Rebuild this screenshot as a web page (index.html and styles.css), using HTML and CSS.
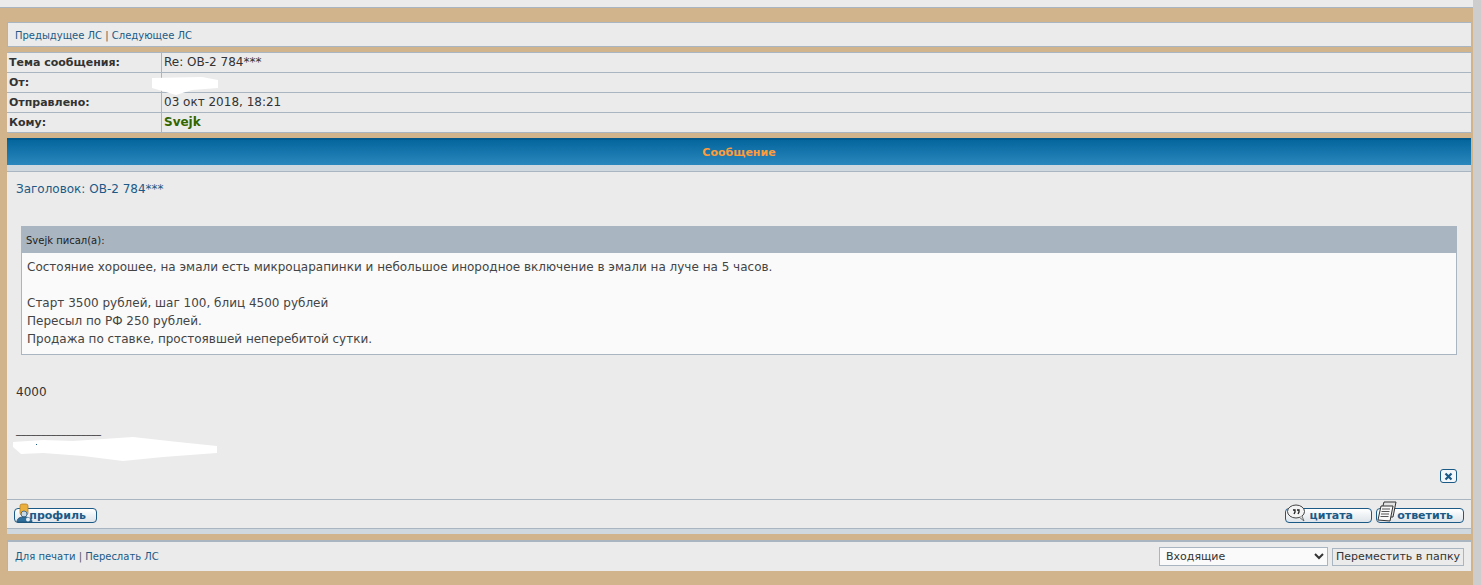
FILE: index.html
```html
<!DOCTYPE html>
<html lang="ru">
  <head>
    <meta charset="UTF-8" />
    <title>Личное сообщение</title>
    <link rel="stylesheet" href="styles.css">
  </head>
  <body>
    <div class="page">
      <div class="top-strip">
        <span class="top-text">Кассовый пакет: 675 + 5 = 4322</span>
      </div>

      <div class="panel nav-panel">
        <a class="link" href="#">Предыдущее ЛС</a>
        <span class="sep">|</span>
        <a class="link" href="#">Следующее ЛС</a>
      </div>

      <div class="info">
        <div class="info-row">
          <div class="info-label">Тема сообщения:</div>
          <div class="info-value">Re: ОВ-2 784***</div>
        </div>
        <div class="info-row">
          <div class="info-label">От:</div>
          <div class="info-value"></div>
        </div>
        <div class="info-row">
          <div class="info-label">Отправлено:</div>
          <div class="info-value">03 окт 2018, 18:21</div>
        </div>
        <div class="info-row">
          <div class="info-label">Кому:</div>
          <div class="info-value"><b class="user">Svejk</b></div>
        </div>
      </div>

      <div class="message">
        <div class="message-head">Сообщение</div>
        <div class="message-band"></div>
        <div class="message-body">
          <div class="subject">Заголовок: ОВ-2 784***</div>
          <div class="quote">
            <div class="quote-head">Svejk писал(а):</div>
            <div class="quote-body">
              <p>Состояние хорошее, на эмали есть микроцарапинки и небольшое инородное включение в эмали на луче на 5 часов.</p>
              <p class="gap">Старт 3500 рублей, шаг 100, блиц 4500 рублей</p>
              <p>Пересыл по РФ 250 рублей.</p>
              <p>Продажа по ставке, простоявшей неперебитой сутки.</p>
            </div>
          </div>
          <div class="reply-text">4000</div>
          <div class="signature">_________________</div>
          <div class="delete-row">
            <a class="delete-btn" href="#">
              <svg width="11" height="9" viewBox="0 0 11 9"><path d="M2.5 1.5l6 6M8.5 1.5l-6 6" stroke="#1b5a86" stroke-width="2.2" fill="none"/></svg>
            </a>
          </div>
        </div>
        <div class="buttons">
          <a class="btn btn-profile" href="#">
            <svg class="btn-icon" width="20" height="20" viewBox="0 0 20 20">
              <rect x="5" y="1" width="8" height="11" rx="2" fill="#eaaf3c" stroke="#b9822a" stroke-width=".8"/>
              <circle cx="9" cy="11" r="3" fill="#c9d9e6" stroke="#49708f"/>
              <path d="M2 19c0-4 3-5 7-5s8 1 8 5z" fill="#2f6f9d" stroke="#24506f" stroke-width=".8"/>
              <circle cx="13" cy="16.500" r="2" fill="#e7eef4"/>
            </svg>
            профиль
          </a>
          <div class="btn-group">
            <a class="btn btn-quote" href="#">
              <svg class="btn-icon" width="22" height="19" viewBox="0 0 22 19">
                <ellipse cx="10" cy="7.500" rx="8.500" ry="6.500" fill="#f3f3f3" stroke="#444"/>
                <path d="M13 13l5 4-2-5" fill="#ddd" stroke="#555" stroke-width=".8"/>
                <path d="M7 6h2v2l-1 2M11 6h2v2l-1 2" fill="none" stroke="#222" stroke-width="1.300"/>
              </svg>
              цитата
            </a>
            <a class="btn btn-reply" href="#">
              <svg class="btn-icon" width="21" height="22" viewBox="0 0 21 22">
                <path d="M3 16l4-15h12l-3 15z" fill="#e4e4e4" stroke="#333"/>
                <path d="M1 19l3-14h12l-3 15z" fill="#f8f8f8" stroke="#333"/>
                <path d="M5 8h8M4.500 10.500h8M4 13h8M3.500 15.500h8" stroke="#555"/>
              </svg>
              ответить
            </a>
          </div>
        </div>
        <div class="message-band message-foot"></div>
      </div>

      <div class="panel bottom-panel">
        <div>
          <a class="link" href="#">Для печати</a>
          <span class="sep">|</span>
          <a class="link" href="#">Переслать ЛС</a>
        </div>
        <div class="move">
          <select class="folder">
            <option>Входящие</option>
          </select>
          <button class="move-btn" type="button">Переместить в папку</button>
        </div>
      </div>
    </div>

    <!-- замазанные места на скриншоте -->
    <svg class="blot blot-from" width="66" height="18" viewBox="0 0 66 18"><path d="M0 1L50 0 66 3V11L40 13 24 18 0 11z" fill="#fff"/></svg>
    <svg class="blot blot-sign" width="205" height="24" viewBox="0 0 205 24"><path d="M0 5L30 3 60 4 120 0 165 5 204 9V16L150 20 110 24 70 19 30 16 8 17 0 10z" fill="#fff"/><rect x="23" y="7" width="1" height="1" fill="#1b5a86"/></svg>
  </body>
</html>
```

FILE: styles.css
```css
* {
  box-sizing: border-box;
}
html {
  background: #cdcdcd;
}
body {
  margin: 0;
  height: 585px;
  overflow: hidden;
  font: 12px/18px "DejaVu Sans", Verdana, sans-serif;
  color: #333;
}
.page {
  width: 1473px;
  height: 585px;
  padding: 0 2px 0 7px;
  background: #d1b48c;
}
p {
  margin: 0;
}
.link {
  color: #1b5a86;
  text-decoration: none;
}
.sep {
  color: #555;
}

.top-strip {
  height: 8px;
  margin: 0 -2px 14px -7px;
  padding-right: 8px;
  background: #ebebeb;
  border-bottom: 1px solid #a9b5c1;
  text-align: right;
  overflow: hidden;
}
.top-text {
  display: block;
  margin-top: -11px;
  font-size: 10px;
  line-height: 14px;
}

.panel {
  background: #ebebeb;
  border: 1px solid #a9b5c1;
  border-width: 1px 0 1px 1px;
  font-size: 10px;
}
.nav-panel {
  height: 25px;
  padding: 6px 7px 0;
  line-height: 14px;
  margin-bottom: 5px;
}
.info {
  height: 81px;
  background: #ebebeb;
  border-top: 1px solid #a9b5c1;
  margin-bottom: 5px;
}
.info-row {
  display: flex;
  height: 20px;
  border-bottom: 1px solid #a9b5c1;
}
.info-label {
  width: 155px;
  padding-left: 2px;
  border-right: 1px solid #a9b5c1;
  font-size: 11px;
  font-weight: bold;
  line-height: 20px;
}
.info-value {
  padding-left: 2px;
  line-height: 18px;
}
.user {
  color: #336600;
}

.message-head {
  height: 27px;
  background: linear-gradient(#04669d, #2a87bd);
  border-top: 2px solid #04598c;
  color: #ff9c3c;
  font-size: 11px;
  font-weight: bold;
  line-height: 25px;
  text-align: center;
}
.message-band {
  height: 7px;
  background: #cfd7df;
  border-bottom: 1px solid #a9b5c1;
}
.message-body {
  height: 328px;
  padding: 8px 14px 0 9px;
  background: #ebebeb;
  border-bottom: 1px solid #a9b5c1;
}
.subject {
  color: #1b5a86;
  margin-bottom: 28px;
}
.quote {
  margin-left: 5px;
  background: #fafafa;
  border: 1px solid #a9b5c1;
}
.quote-head {
  height: 26px;
  background: #a9b5c1;
  padding-left: 4px;
  font-size: 10px;
  line-height: 27px;
  color: #222;
}
.quote-body {
  padding: 5px 5px 6px;
  color: #444;
}
.gap {
  margin-top: 18px;
}
.reply-text {
  margin-top: 28px;
}
.signature {
  margin-top: 22px;
  font-size: 10px;
  line-height: 14px;
}
.delete-row {
  display: flex;
  justify-content: flex-end;
  margin-top: 32px;
}
.delete-btn {
  display: flex;
  align-items: center;
  justify-content: center;
  width: 17px;
  height: 14px;
  background: #f4f7fa;
  border: 1px solid #1b5a86;
  border-radius: 3px;
}

.buttons {
  display: flex;
  justify-content: space-between;
  height: 29px;
  padding: 8px 7px 0 7px;
  background: #ebebeb;
  border-bottom: 1px solid #a9b5c1;
}
.btn-group {
  display: flex;
  gap: 4px;
}
.btn {
  position: relative;
  display: block;
  height: 15px;
  background: linear-gradient(#fff, #dde4ea);
  border: 1px solid #1b5a86;
  border-radius: 4px;
  color: #1b5a86;
  font-size: 11px;
  font-weight: bold;
  line-height: 14px;
  text-decoration: none;
  text-align: right;
}
.btn-icon {
  position: absolute;
  left: 0;
  bottom: -1px;
}
.btn-profile {
  width: 83px;
  padding-right: 10px;
}
.btn-quote {
  width: 87px;
  padding-right: 18px;
}
.btn-reply {
  width: 88px;
  padding-right: 10px;
}
.message-foot {
  height: 5px;
  border-bottom: 0;
}

.bottom-panel {
  display: flex;
  justify-content: space-between;
  align-items: center;
  height: 31px;
  margin-top: 6px;
  padding: 0 7px;
  border-top: 2px solid #a9b5c1;
  border-bottom: 0;
}
.move {
  display: flex;
  gap: 4px;
  align-items: center;
}
.folder {
  width: 169px;
  height: 19px;
  padding-left: 2px;
  background: #fafafa;
  border: 1px solid #a9b5c1;
  color: #333;
  font: 11px "DejaVu Sans", Verdana, sans-serif;
}
.move-btn {
  width: 132px;
  height: 18px;
  padding: 0;
  background: #ebebeb;
  border: 1px solid #a9b5c1;
  color: #333;
  font: 11px "DejaVu Sans", Verdana, sans-serif;
}

.blot {
  position: absolute;
}
.blot-from {
  left: 152px;
  top: 77px;
}
.blot-sign {
  left: 13px;
  top: 437px;
}
```
